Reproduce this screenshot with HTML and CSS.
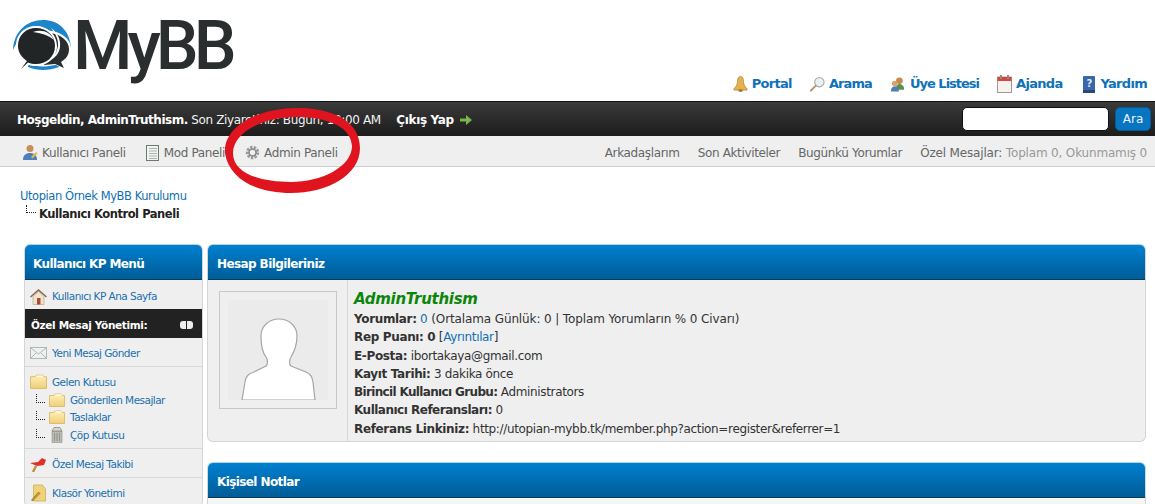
FILE: index.html
```html
<!DOCTYPE html>
<html lang="tr">
<head>
<meta charset="utf-8">
<title>Kullanıcı Kontrol Paneli</title>
<link rel="stylesheet" href="styles.css">
</head>
<body>
<svg class="defs" width="0" height="0" aria-hidden="true">
  <defs>
    <linearGradient id="fold" x1="0" y1="0" x2="0" y2="1"><stop offset="0" stop-color="#fff0b8"/><stop offset="1" stop-color="#f0cf78"/></linearGradient>
    <symbol id="folder" viewBox="0 0 16 14">
      <path d="M.5 2.500h4.500l1-1.500h6l1 1.500h2.500v11H.5z" fill="url(#fold)" stroke="#d8b560" stroke-width=".8"/>
      <path d="M6.500 1.300h5.500l.8 1.500H6z" fill="#fffbe6"/>
    </symbol>
  </defs>
</svg>

<header class="top">
  <div class="logo">
    <svg class="logo-mark" width="60" height="56" viewBox="0 0 60 56">
      <path d="M1 31C2 12 15 1 31 1c15 0 27 10 28 28-5-13-16-18-28-18S6 18 1 31z" fill="#1d86cb"/>
      <path d="M16 44c10 5 23 5 33-2l-2 6c-10 4-22 4-31 0z" fill="#1d86cb"/>
      <path d="M38 12c12 1 21 8 21 18 0 6-3 11-8 14l5 8-12-6-12 1z" fill="#fff"/>
      <path d="M38 14c11 1 19 8 19 16 0 6-3 10-8 13l3 6-9-4-11 1z" fill="#2b2e2f"/>
      <path d="M7 54l6-11C7 39 4 33 4 27 4 15 13 7 24 7s21 8 21 20-10 20-21 20c-3 0-5-.4-7-1z" fill="#fff"/>
      <path d="M9 50l6-8C9 38 6 33 6 27 6 16 14 9 24 9s19 7 19 18-9 18-19 18c-3 0-5-.4-8-1.500z" fill="#222526"/>
      <path d="M21 13c9-3 17 0 21 8-6-5-13-7-21-8z" fill="#fff"/>
      <path d="M39 9c6 4 10 11 9 19-1 7-5 11-11 14 5-4 8-9 9-15 .6-7-3-13-7-18z" fill="#fff"/>
    </svg>
    <span class="logo-text">MyBB</span>
  </div>
  <nav class="toplinks">
    <a href="#"><svg width="15" height="18" viewBox="0 0 16 18"><path d="M8 1c2 0 3 1.500 3 4 0 4 1.500 7 4 9v1.500H1V14c2.500-2 4-5 4-9 0-2.500 1-4 3-4z" fill="#e3b24e" stroke="#a8772a" stroke-width=".7"/><ellipse cx="8" cy="16" rx="2.500" ry="1.500" fill="#a8772a"/></svg>Portal</a>
    <a class="search-link" href="#"><svg width="15" height="16" viewBox="0 0 16 16"><circle cx="10" cy="6" r="5" fill="#e8f0f4" stroke="#a9aaa6" stroke-width="1.200"/><path d="M6 10l-5 5" stroke="#b29a6e" stroke-width="2.200" stroke-linecap="round"/></svg>Arama</a>
    <a class="members" href="#"><svg width="16" height="17" viewBox="0 0 17 17"><circle cx="10" cy="4.500" r="3.500" fill="#c48a4e"/><path d="M6 14c0-4 2-6 4-6s5 2 5 5v1z" fill="#5c8f4a"/><circle cx="5" cy="7.500" r="3" fill="#d9a26a"/><path d="M1 16c0-4 1.500-5.500 4-5.500S9.500 12 9.500 16z" fill="#4e7fb0"/></svg>Üye Listesi</a>
    <a href="#"><svg width="15" height="18" viewBox="0 0 15 18"><rect x=".5" y="2" width="14" height="15.500" fill="#f6f2ee" stroke="#a09a96"/><rect x=".5" y="2" width="14" height="4" fill="#d6463c"/><rect x="3" y="0" width="2" height="4" fill="#8c8c8c"/><rect x="10" y="0" width="2" height="4" fill="#8c8c8c"/></svg>Ajanda</a>
    <a class="help" href="#"><svg width="14" height="17" viewBox="-1 0 14 17"><rect width="12" height="17" rx="1" fill="#3a67a8"/><rect y="14" width="12" height="3" fill="#26487e"/><text class="help-q" x="6" y="11" text-anchor="middle">?</text></svg>Yardım</a>
  </nav>
</header>

<section class="panel">
  <div class="welcome"><b>Hoşgeldin, AdminTruthism.</b> Son Ziyaretiniz: Bugün, 10:00 AM <a class="logout" href="#">Çıkış Yap</a>
    <svg class="arrow" width="12" height="10" viewBox="0 0 12 10"><path d="M0 3.500h6V0l6 5-6 5V6.500H0z" fill="#7ab648"/></svg>
  </div>
  <form class="search">
    <input class="search-input" type="text" aria-label="Ara">
    <button class="search-btn" type="button">Ara</button>
  </form>
</section>

<nav class="subbar">
  <div class="sub-left">
    <a href="#"><svg width="16" height="17" viewBox="0 0 16 17"><circle cx="8" cy="4.500" r="3.500" fill="#c98e58"/><path d="M1 16c0-5 3-7 7-7s7 2 7 7z" fill="#4d7fb8"/><path d="M9 13l5-5 1.500 1.500-5 5z" fill="#e4b84a"/></svg>Kullanıcı Paneli</a>
    <a class="mod" href="#"><svg width="13" height="16" viewBox="0 0 13 16"><rect x=".5" y=".5" width="12" height="15" fill="#f2f4ee" stroke="#6d7a72"/><path d="M3 3.500h8M3 6h8M3 8.500h8M3 11h8M3 13.500h8" stroke="#a7b4bc"/></svg>Mod Paneli</a>
    <a href="#"><svg width="15" height="15" viewBox="0 0 14 14"><circle cx="7" cy="7" r="4.500" fill="none" stroke="#9a9a9a" stroke-width="3.500" stroke-dasharray="2 1.100"/><circle cx="7" cy="7" r="3.300" fill="none" stroke="#8a8a8a" stroke-width="1.400"/></svg>Admin Paneli</a>
  </div>
  <div class="sub-right">
    <a href="#">Arkadaşlarım</a>
    <a href="#">Son Aktiviteler</a>
    <a href="#">Bugünkü Yorumlar</a>
    <span class="pm">Özel Mesajlar: <span class="muted">Toplam 0, Okunmamış 0</span></span>
  </div>
</nav>

<div class="crumbs">
  <a href="#">Utopian Örnek MyBB Kurulumu</a>
  <div class="crumb-here"><i class="tree"></i><b>Kullanıcı Kontrol Paneli</b></div>
</div>

<main class="layout">
  <aside class="side block">
    <h2 class="block-head">Kullanıcı KP Menü</h2>
    <div class="side-row first">
      <svg class="si" width="17" height="17" viewBox="0 0 17 17"><path d="M8.500 1L0 8.500l1 1L8.500 3 16 9.500l1-1z" fill="#8c6a4a"/><path d="M3 8.500L8.500 3.500 14 8.500V16.500H3z" fill="#f0e4d0" stroke="#a78a68" stroke-width=".5"/><rect x="7" y="10" width="3.500" height="6.500" fill="#b14a2c"/></svg>
      <a href="#">Kullanıcı KP Ana Sayfa</a>
    </div>
    <div class="side-title"><span>Özel Mesaj Yönetimi:</span><i class="toggle"><i></i><i></i></i></div>
    <div class="side-row mail">
      <svg class="si" width="17" height="12" viewBox="0 0 17 12"><rect x=".5" y=".5" width="16" height="11" fill="#eef1f1" stroke="#b0b8b8"/><path d="M1 1l7.500 6L16 1M1 11l5-5M16 11l-5-5" fill="none" stroke="#b0b8b8"/></svg>
      <a href="#">Yeni Mesaj Gönder</a>
    </div>
    <div class="side-group">
      <div class="side-line">
        <svg class="si" width="17" height="15"><use href="#folder"/></svg>
        <a href="#">Gelen Kutusu</a>
      </div>
      <div class="side-line sub"><i class="tree"></i><svg class="si-s" width="16" height="14"><use href="#folder"/></svg><a href="#">Gönderilen Mesajlar</a></div>
      <div class="side-line sub"><i class="tree"></i><svg class="si-s" width="16" height="14"><use href="#folder"/></svg><a href="#">Taslaklar</a></div>
      <div class="side-line sub"><i class="tree"></i><svg class="si-s" width="16" height="16" viewBox="0 0 16 16"><path d="M3 4h10v11.500H3z" fill="#bcbcb4" stroke="#8e8e88" stroke-width=".6"/><path d="M5 0.500h6L13 4H3zM5.500 6v8M8 6v8M10.500 6v8" fill="#d6d6d0" stroke="#7f7f7a" stroke-width=".7"/></svg><a href="#">Çöp Kutusu</a></div>
    </div>
    <div class="side-row">
      <svg class="si" width="17" height="15" viewBox="0 0 17 15"><path d="M0 6l8-1 4-4 4 2-2 5-7 1z" fill="#e0302a"/><path d="M6 9l-3 6" stroke="#c88a3c" stroke-width="2.400"/></svg>
      <a href="#">Özel Mesaj Takibi</a>
    </div>
    <div class="side-row">
      <svg class="si" width="17" height="18" viewBox="0 0 16 18"><path d="M3 1h9l3 4v12H3z" fill="#f0d27a" stroke="#c8a74e" stroke-width=".7"/><path d="M1 16l7-8 1.500 1.500L2 17z" fill="#d9a030" stroke="#5a4a20" stroke-width=".5"/></svg>
      <a href="#">Klasör Yönetimi</a>
    </div>
  </aside>

  <div class="content">
    <section class="block info">
      <h2 class="block-head">Hesap Bilgileriniz</h2>
      <div class="info-body">
        <div class="avatar-cell">
          <div class="avatar">
            <svg width="100" height="100" viewBox="0 0 100 100">
              <rect width="100" height="100" fill="#ebebeb"/>
              <path d="M14 100l3-18c1-6 3-8 9-10l12-6c2-2 2-6 0-9-4-5-5-13-5-21 0-10 8-17 18-17s18 7 18 17c0 8-3 16-6 21-2 3-2 7 0 9l15 6c5 2 6 5 7 10l2 18z" fill="#fff" stroke="#a5a5a5" stroke-width="1.200"/>
            </svg>
          </div>
        </div>
        <div class="info-text">
          <div class="uname">AdminTruthism</div>
          <div><b>Yorumlar:</b> <span class="stats"><a href="#">0</a> (Ortalama Günlük: 0 | Toplam Yorumların % 0 Civarı)</span></div>
          <div><b>Rep Puanı: 0</b> [<a href="#">Ayrıntılar</a>]</div>
          <div><b>E-Posta:</b> ibortakaya@gmail.com</div>
          <div><b>Kayıt Tarihi:</b> 3 dakika önce</div>
          <div><b class="tight">Birincil Kullanıcı Grubu:</b> Administrators</div>
          <div><b class="tight2">Kullanıcı Referansları:</b> 0</div>
          <div><b>Referans Linkiniz:</b> http://utopian-mybb.tk/member.php?action=register&amp;referrer=1</div>
        </div>
      </div>
    </section>
    <section class="block notes">
      <h2 class="block-head">Kişisel Notlar</h2>
      <div class="notes-body"></div>
    </section>
  </div>
</main>

<svg class="scribble" width="150" height="100" viewBox="0 0 150 100" aria-hidden="true">
  <path fill-rule="evenodd" d="M4 52C2 25 38 6 80 7c35 1 59 15 59 40 0 28-34 45-69 45C35 92 8 78 4 52zM12 52c0 20 26 29 58 29 30 0 61-15 61-36-1-17-19-28-53-29-36-1-66 16-66 36z" fill="#e0141e"/>
</svg>
</body>
</html>
```

FILE: styles.css
```css
* { box-sizing: border-box; }
html, body { margin: 0; height: 504px; overflow: hidden; background: #fff; }
body { position: relative; font: 12px/18px "DejaVu Sans", Verdana, sans-serif; color: #333; letter-spacing: -0.35px; }
a { color: #0f6fb4; text-decoration: none; }
h2 { margin: 0; }
.defs { position: absolute; }

.top { height: 101px; display: flex; justify-content: space-between; align-items: flex-start; }
.logo { display: flex; align-items: flex-start; padding: 5px 0 0 12px; }
.logo-mark { margin-top: 14px; }
.logo-text { font: 500 68px/82px Roboto, sans-serif; letter-spacing: -5px; color: #2b2e2f; margin-left: 1px; }
.toplinks { display: flex; gap: 18px; padding: 74px 8px 0 0; font-weight: 700; font-size: 13px; letter-spacing: -0.7px; }
.toplinks a { display: flex; align-items: center; gap: 4px; color: #0f72b8; height: 20px; }
.toplinks .help { margin-left: 2px; }
.toplinks .search-link { letter-spacing: -0.9px; }
.toplinks .members { letter-spacing: -1px; }
.help-q { font: 700 10px "DejaVu Sans", sans-serif; fill: #dfe9f5; }

.panel { height: 35px; background: linear-gradient(#3a3a3a, #1c1c1c); border-top: 1px solid #111; display: flex; justify-content: space-between; align-items: center; padding: 0 4px 0 17px; color: #f2f2f2; }
.welcome { display: flex; align-items: center; white-space: pre; padding-top: 2px; }
.welcome b { color: #fff; letter-spacing: -0.5px; }
.logout { color: #fff; font-weight: 700; margin-left: 12px; }
.arrow { margin-left: 6px; }
.search { display: flex; gap: 6px; align-items: center; }
.search-input { width: 147px; height: 24px; border: 1px solid #111; border-radius: 5px; background: #fff; padding: 0; }
.search-btn { width: 36px; height: 24px; border: 1px solid #055b95; border-radius: 5px; background: #0875c2; color: #eaf3fa; font: 12px "DejaVu Sans", sans-serif; padding: 0; }

.subbar { height: 31px; background: #efefef; border-bottom: 1px solid #d0d0d0; display: flex; justify-content: space-between; align-items: center; padding: 3px 8px 0 22px; color: #666; }
.subbar a { color: #666; }
.sub-left { display: flex; gap: 20px; }
.sub-left a { display: flex; align-items: center; gap: 4px; }
.sub-left .mod { gap: 5px; }
.sub-right { display: flex; gap: 18px; }
.pm { letter-spacing: -0.17px; }
.muted { color: #999; }

.crumbs { padding: 20px 0 0 20px; height: 77px; font-size: 11.500px; letter-spacing: -0.43px; }
.crumbs a { color: #0f6fb4; }
.crumb-here { display: flex; color: #222; height: 18px; letter-spacing: -0.45px; }
.tree { display: block; width: 10px; height: 8px; border-left: 1px dotted #222; border-bottom: 1px dotted #222; flex: none; }
.crumb-here .tree { margin: 0 3px 0 6px; }

.layout { display: flex; gap: 4px; padding: 0 9px 0 24px; align-items: flex-start; }
.block { background: #efefef; border: 1px solid #d2d6d6; border-top-color: #b7d3df; border-radius: 6px; overflow: hidden; }
.block-head { height: 35px; line-height: 39px; font-size: 12px; font-weight: 700; color: #fff; background: linear-gradient(#0080d0, #005c96); border-bottom: 1px solid #063c5e; padding-left: 8px; letter-spacing: -0.6px; }
.content .block-head { padding-left: 9px; }

.side { width: 179px; font-size: 10.500px; letter-spacing: -0.53px; flex: none; }
.side a { color: #1a6fae; }
.side-row { display: flex; align-items: center; gap: 5px; padding: 2px 0 0 5px; height: 29px; border-top: 1px solid #d8d8d8; }
.side-row.first { border-top: 0; padding-top: 3px; }
.side-row.mail { border-top: 0; height: 28px; }
.side-title { height: 29px; background: #222; color: #fff; font-weight: 700; letter-spacing: -0.35px; display: flex; justify-content: space-between; align-items: center; padding: 2px 9px 0 6px; }
.toggle { display: flex; gap: 1px; }
.toggle i { display: block; width: 6px; height: 8px; background: #eee; border-radius: 3px 0 0 3px; }
.toggle i:last-child { border-radius: 0 3px 3px 0; }
.side-group { border-top: 1px solid #d8d8d8; height: 82px; padding-top: 6px; }
.side-line { display: flex; align-items: center; gap: 5px; padding-left: 5px; height: 17.700px; }
.side-line.sub { padding-left: 11px; gap: 0; }
.side-line.sub .tree { width: 9px; height: 9px; margin: -3px 4px 0 0; }
.si-s { margin-right: 5px; flex: none; }
.si { flex: none; }

.content { flex: 1; display: flex; flex-direction: column; gap: 20px; }
.info-body { display: flex; height: 161px; }
.avatar-cell { width: 140px; border-right: 1px solid #d8d8d8; padding: 11px 0 0 11px; }
.avatar { width: 118px; height: 118px; border: 1px solid #c8c8c8; display: flex; align-items: center; justify-content: center; }
.avatar svg { display: block; }
.info-text { padding: 9px 0 0 6px; line-height: 18.300px; }
.uname { font: italic 700 15px/21px "DejaVu Sans", sans-serif; letter-spacing: -0.3px; color: #0a860a; }
.stats { letter-spacing: -0.12px; }
.tight { letter-spacing: -0.65px; }
.tight2 { letter-spacing: -0.5px; }
.notes-body { height: 60px; background: #f5f5f5; }

.scribble { position: absolute; left: 221px; top: 101px; }
```
